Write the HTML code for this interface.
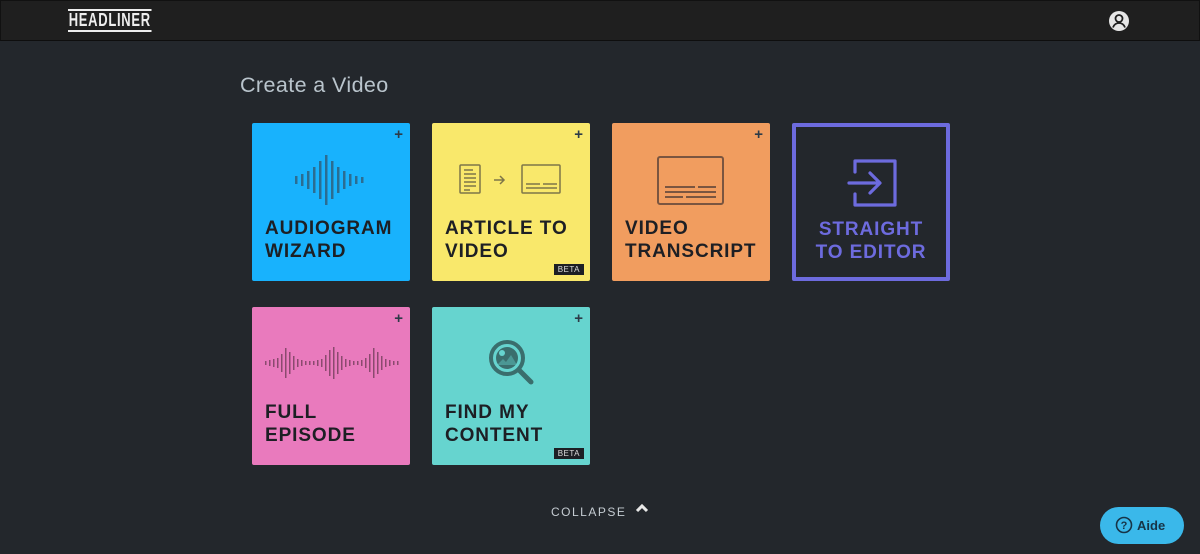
<!DOCTYPE html>
<html><head><style>
*{margin:0;padding:0;box-sizing:border-box}
body{width:1200px;height:554px;background:#23272c;font-family:"Liberation Sans",sans-serif;position:relative;overflow:hidden}
.hdr{position:absolute;left:0;top:0;width:1200px;height:41px;background:#1f1f1f;border:1px solid #111;border-bottom:1px solid #0e0e0e}
.logo{position:absolute;left:67px;top:8px;color:#eee;font:bold 18px "Liberation Sans Narrow","Liberation Sans",sans-serif;letter-spacing:1px;border-top:2px solid #eee;border-bottom:2px solid #eee;line-height:19px;padding:0 1px;transform:scaleX(0.72);transform-origin:0 0}
h1{position:absolute;left:240px;top:73px;font-weight:normal;font-size:21.5px;letter-spacing:0.4px;color:#b9c4cc}
.card{position:absolute;width:158px;height:158px;border-radius:2px}
.card .t{position:absolute;left:13px;top:94px;font-weight:bold;font-size:19px;line-height:23px;color:#1d1f24;letter-spacing:0.9px}
.plus{position:absolute;right:7px;top:3px;font-weight:bold;font-size:15px;color:#2d3b48}
.beta{position:absolute;right:6px;bottom:6px;background:#1d1f24;color:#ddd;font-size:8px;padding:1px 4px;letter-spacing:0.5px}
svg{position:absolute}
</style></head><body>
<div class="hdr"><div class="logo">HEADLINER</div>
<svg style="left:1107px;top:9px" width="22" height="22" viewBox="0 0 22 22"><circle cx="11" cy="11" r="10" fill="#e6e6e6"/><circle cx="11" cy="8.5" r="3.5" fill="none" stroke="#1f1f1f" stroke-width="1.8"/><path d="M5 17.5c1-3 3.5-4.5 6-4.5s5 1.5 6 4.5" fill="none" stroke="#1f1f1f" stroke-width="1.8"/></svg>
</div>
<h1>Create a Video</h1>

<div class="card" style="left:252px;top:123px;background:#18b2fd"><span class="plus">+</span>
<svg style="left:43px;top:32px" width="72" height="50"><g fill="#2b6d92">
<rect x="0" y="21" width="2.5" height="8"/><rect x="6" y="19" width="2.5" height="12"/><rect x="12" y="16" width="2.5" height="18"/><rect x="18" y="12" width="2.5" height="26"/><rect x="24" y="6" width="2.5" height="38"/><rect x="30" y="0" width="2.5" height="50"/><rect x="36" y="6" width="2.5" height="38"/><rect x="42" y="12" width="2.5" height="26"/><rect x="48" y="16" width="2.5" height="18"/><rect x="54" y="19" width="2.5" height="12"/><rect x="60" y="21" width="2.5" height="8"/><rect x="66" y="22" width="2.5" height="6"/></g></svg>
<div class="t">AUDIOGRAM<br>WIZARD</div></div>

<div class="card" style="left:432px;top:123px;background:#f9e86b"><span class="plus">+</span>
<svg style="left:27px;top:41px" width="105" height="32" viewBox="0 0 105 32" fill="none" stroke="#7e7649" stroke-width="1.5"><rect x="1" y="1" width="20" height="28" rx="1"/><path d="M5 6h9M5 10h12M5 14h12M5 18h12M5 22h12M5 26h6"/><path d="M35 16h10M41 12l4 4-4 4"/><rect x="63" y="1" width="38" height="28" rx="1"/><path d="M67 20h14M84 20h14M67 24h31"/></svg>
<div class="t">ARTICLE TO<br>VIDEO</div><span class="beta">BETA</span></div>

<div class="card" style="left:612px;top:123px;background:#f19d5f"><span class="plus">+</span>
<svg style="left:45px;top:33px" width="68" height="50" viewBox="0 0 68 50" fill="none" stroke="#7a5540" stroke-width="2"><rect x="1" y="1" width="65" height="47" rx="2"/><path d="M8 31h30M41 31h18M8 36h51M8 41h18M29 41h30"/></svg>
<div class="t">VIDEO<br>TRANSCRIPT</div></div>

<div class="card" style="left:792px;top:123px;border:4px solid #6d6bde;background:transparent">
<svg style="left:51px;top:29px" width="52" height="52" viewBox="0 0 52 52" fill="none" stroke="#6d6bde" stroke-width="3.2" stroke-linecap="round" stroke-linejoin="round"><path d="M8 16V5h40v44H8V38"/><path d="M2 27h30M23 17l10 10-10 10"/></svg>
<div class="t" style="color:#6d6bde;left:0;width:150px;text-align:center;top:91px">STRAIGHT<br>TO EDITOR</div></div>

<div class="card" style="left:252px;top:307px;background:#e97abd"><span class="plus">+</span>
<svg style="left:13px;top:40px" width="134" height="32"><g fill="#8a4a6e">
<rect x="0" y="14" width="1.5" height="4"/><rect x="4" y="13" width="1.5" height="6"/><rect x="8" y="12" width="1.5" height="8"/><rect x="12" y="11" width="1.5" height="10"/><rect x="16" y="7" width="1.5" height="18"/><rect x="20" y="1" width="1.5" height="30"/><rect x="24" y="5" width="1.5" height="22"/><rect x="28" y="9" width="1.5" height="14"/><rect x="32" y="12" width="1.5" height="8"/><rect x="36" y="13" width="1.5" height="6"/><rect x="40" y="14" width="1.5" height="4"/><rect x="44" y="14" width="1.5" height="4"/>
<rect x="48" y="14" width="1.5" height="4"/><rect x="52" y="13" width="1.5" height="6"/><rect x="56" y="12" width="1.5" height="8"/><rect x="60" y="8" width="1.5" height="16"/><rect x="64" y="3" width="1.5" height="26"/><rect x="68" y="0" width="1.5" height="32"/><rect x="72" y="5" width="1.5" height="22"/><rect x="76" y="9" width="1.5" height="14"/><rect x="80" y="12" width="1.5" height="8"/><rect x="84" y="13" width="1.5" height="6"/><rect x="88" y="14" width="1.5" height="4"/><rect x="92" y="14" width="1.5" height="4"/>
<rect x="96" y="13" width="1.5" height="6"/><rect x="100" y="11" width="1.5" height="10"/><rect x="104" y="7" width="1.5" height="18"/><rect x="108" y="1" width="1.5" height="30"/><rect x="112" y="5" width="1.5" height="22"/><rect x="116" y="9" width="1.5" height="14"/><rect x="120" y="12" width="1.5" height="8"/><rect x="124" y="13" width="1.5" height="6"/><rect x="128" y="14" width="1.5" height="4"/><rect x="132" y="14" width="1.5" height="4"/></g></svg>
<div class="t">FULL<br>EPISODE</div></div>

<div class="card" style="left:432px;top:307px;background:#66d4cf"><span class="plus">+</span>
<svg style="left:55px;top:31px" width="50" height="50" viewBox="0 0 50 50"><circle cx="20" cy="20" r="16" fill="none" stroke="#3a6e6d" stroke-width="4"/><circle cx="20" cy="20" r="11" fill="#3a6e6d"/><circle cx="15" cy="15" r="3" fill="#66d4cf"/><path d="M10 27l6-6 3 3 5-7 6 10z" fill="#66d4cf" opacity="0.4"/><path d="M32 32l12 12" stroke="#3a6e6d" stroke-width="5" stroke-linecap="round"/></svg>
<div class="t">FIND MY<br>CONTENT</div><span class="beta">BETA</span></div>

<div style="position:absolute;left:551px;top:505px;color:#c5ccd2;font-size:12px;letter-spacing:1.5px">COLLAPSE</div>
<svg style="left:635px;top:503px" width="14" height="10" viewBox="0 0 14 10"><path d="M2 8l5-5 5 5" fill="none" stroke="#e8e8e8" stroke-width="3"/></svg>

<div style="position:absolute;left:1100px;top:507px;width:84px;height:37px;border-radius:19px;background:#3ab8ea;color:#173447;font-weight:bold;font-size:13px;line-height:37px;padding-left:37px">Aide</div>
<svg style="left:1115px;top:516px" width="18" height="18" viewBox="0 0 18 18"><circle cx="9" cy="9" r="7.5" fill="none" stroke="#173447" stroke-width="1.6"/><text x="9" y="13" text-anchor="middle" font-family="Liberation Sans" font-weight="bold" font-size="11" fill="#173447">?</text></svg>
</body></html>
